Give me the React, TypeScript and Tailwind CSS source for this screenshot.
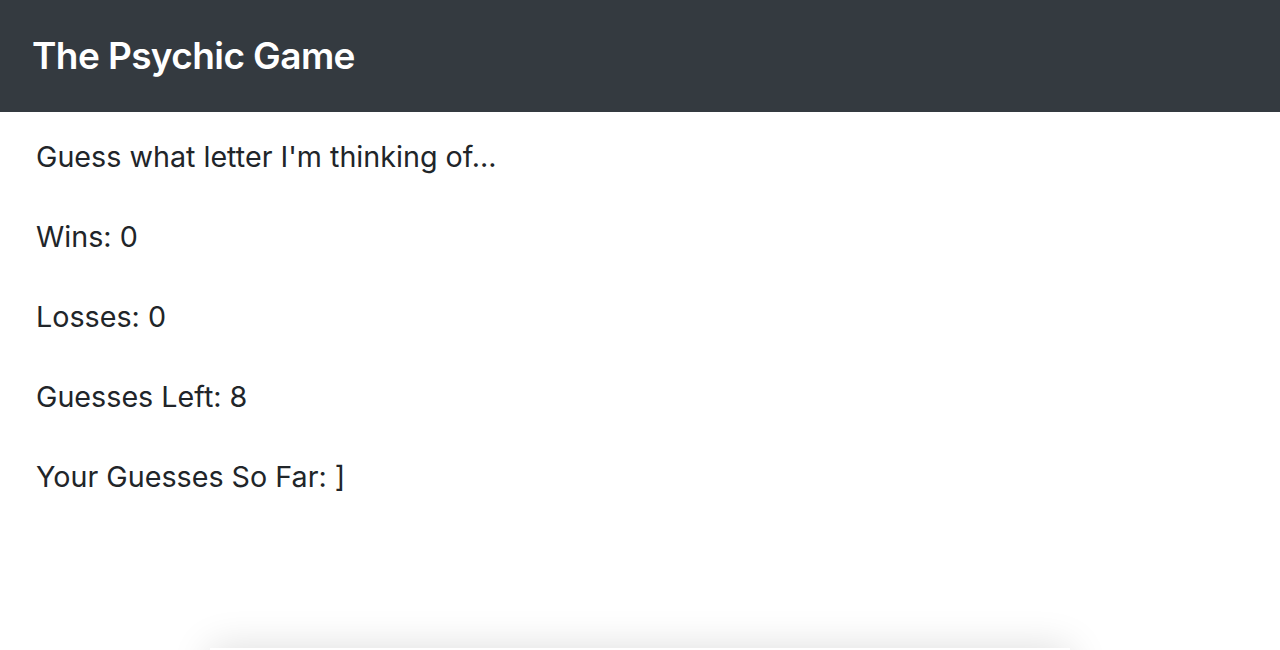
import React from "react";

const stats = [
  "Guess what letter I'm thinking of...",
  "Wins: 0",
  "Losses: 0",
  "Guesses Left: 8",
  "Your Guesses So Far: ]",
];

const App: React.FC = () => {
  return (
    <div className="h-[650px] bg-white overflow-hidden font-['Inter',sans-serif] text-[#212529]">
      <header className="h-[112px] bg-[#343a40] flex items-center px-[32px]">
        <h1 className="text-[37px] font-semibold text-white tracking-[-0.6px]">The Psychic Game</h1>
      </header>
      <main className="px-[36px] pt-[24px] flex flex-col gap-[38px]">
        {stats.map((s) => (
          <p key={s} className="text-[28.7px] leading-[42px]">
            {s}
          </p>
        ))}
      </main>
      <div className="mx-auto mt-[150px] w-[860px] h-[100px] bg-white shadow-[0_0_40px_rgba(0,0,0,0.14)]" />
    </div>
  );
};

export default App;
